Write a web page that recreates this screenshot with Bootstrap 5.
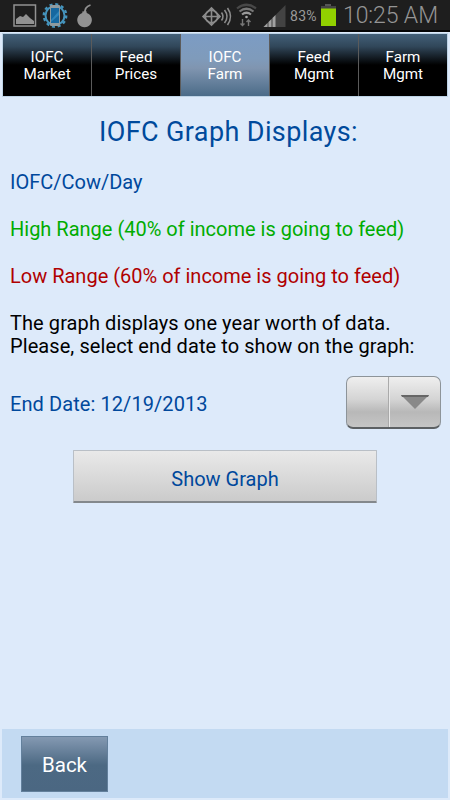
<!DOCTYPE html>
<html lang="en">
<head>
<meta charset="utf-8">
<meta name="viewport" content="width=device-width, initial-scale=1">
<title>IOFC Farm</title>
<link href="https://cdn.jsdelivr.net/npm/bootstrap@5.3.0/dist/css/bootstrap.min.css" rel="stylesheet">
<style>
body{font-family:Roboto,"Liberation Sans",sans-serif;background:#ddeafa;color:#000;font-size:20px;line-height:23.4px;height:800px;overflow:hidden}
.status{height:32px;background:#1e1e1e;border-bottom:2px solid #050505;color:#9a9a9a;padding-left:13px;padding-right:13px;flex:none}
.status svg{flex:none}
.pct{font-size:14px;letter-spacing:.3px;margin-left:4px;width:31px;white-space:nowrap;padding-top:3px}
.clock{font-size:23px;letter-spacing:-.1px;white-space:nowrap;margin-left:6px;width:94px;color:#959595;font-weight:300;padding-top:2px}
.tabs{height:62px;margin:2px 3px 0;flex:none;box-shadow:0 0 0 1px #bdd3e6}
.tabs .nav-link{flex:1 1 0;min-width:0;color:#fff;font-size:15.2px;line-height:17.4px;border-radius:0;padding:2px 0 0;background:linear-gradient(#436079 0,#31475a 20%,#000 50%);border:0;border-left:1px solid #5b5b5b}
.tabs .nav-link:first-child{border-left:0}
.tabs .nav-link.active{color:#fff;background:linear-gradient(#7c9cc4 0,#7f9bbb 40%,#8095b0 55%,#4b6b88 100%)}
.page-title{font-size:27px;line-height:32px;color:#004a9c;letter-spacing:.38px;margin-top:20px;padding-left:7px}
.blue{color:#00489c}.green{color:#00ac00}.red{color:#b00000}
.info{padding:23.4px 10px 0}
.info p{margin-bottom:23.4px}
.note{letter-spacing:.08px}
.date-row{padding:0 9px 0 10px;margin-top:17.4px}
.date-label{padding-top:4px;letter-spacing:.08px}
.picker{width:95px;height:53px;padding:0;border:1px solid #8d9499;border-bottom:2px solid #5c6063;border-radius:7px;background:linear-gradient(#efefef,#d4d4d4 45%,#b8b8b8 70%,#c5c5c5)}
.picker-left{width:42px;border-right:1px solid #aaa;box-shadow:1px 0 #e9e9e9}
.graph-btn{width:304px;height:53px;margin-top:21px;font-size:20px;color:#00489c;border:1px solid #b9bfc6;border-bottom:2px solid #83888c;border-radius:1px;background:linear-gradient(#e9e9e9,#cbcbcb);padding:7px 0 0}
.foot{height:69px;margin:0 2px 2px;background:#c3daf2;padding:7px 19px 5px;flex:none}
.back{width:87px;height:56px;font-size:20.5px;border:1px solid #63809c;border-radius:0;color:#fff;background:linear-gradient(#8499b2,#4c6983 52%,#4b6782);padding:2px 0 0}
</style>
<script src="https://cdn.jsdelivr.net/npm/bootstrap@5.3.0/dist/js/bootstrap.bundle.min.js"></script>
</head>
<body class="d-flex flex-column">
<header class="status d-flex align-items-center">
<svg width="82" height="30" viewBox="13 0 82 30">
<rect x="14" y="5" width="21.500" height="21" fill="none" stroke="#929292" stroke-width="1.500"/>
<path d="M16 24v-5l4-3 3 1 3-3 4 4 4 3v3z" fill="#929292"/>
<circle cx="55" cy="15.500" r="9.500" fill="none" stroke="#4594bd" stroke-width="2"/>
<circle cx="55" cy="15.500" r="11.200" fill="none" stroke="#4594bd" stroke-width="2.400" stroke-dasharray="3 2.860"/>
<rect x="50" y="5" width="10" height="21" rx="1" fill="#8f9a9e"/>
<rect x="51" y="8" width="8" height="15" fill="#1668a0"/><path d="M51 20l8-9v4l-8 7z" fill="#2e85bb"/>
<path d="M85 14c-.5-4 .5-7.500 5.500-9" fill="none" stroke="#929292" stroke-width="1.800"/>
<path d="M82.300 11.500l4-.5.500 2a7.300 7.300 0 1 1-4.500 0z" fill="#929292"/>
</svg>
<svg class="ms-auto" width="86" height="30" viewBox="200 0 86 30">
<g fill="none" stroke="#8c8c8c" stroke-width="1.600"><path d="M203 16.500l8.500-8.500 8.500 8.500-8.500 8.500z"/><circle cx="211.500" cy="16.500" r="6.200"/><path d="M203 16.500h17M211.500 8v17M221.500 12.500q3 4 0 8M224.500 10q5 6.500 0 13M227.500 8q6 8.500 0 17"/></g>
<g fill="none" stroke-width="2.200"><path d="M237 8.500q9.500-7.500 19 0" stroke="#484848"/><path d="M239.500 11.500q7-5.500 14 0" stroke="#777"/><path d="M242 14.500q4.500-3.500 9 0" stroke="#9a9a9a"/></g><circle cx="246.500" cy="17" r="1.300" fill="#aaa"/>
<path d="M242.500 19v7m-2-2.500l2 2 2-2M248.500 26v-6.500m-2 2.500l2-2 2 2" fill="none" stroke="#777" stroke-width="1.400"/>
<path d="M263.500 27L285.500 5v22z" fill="#434343"/>
<path d="M263.500 27l4-4v4zM268.500 27v-5l3-3v8zM272.500 27v-9l3-3v12z" fill="#a1a1a1"/>
</svg>
<span class="pct">83%</span>
<svg width="16" height="30" viewBox="321 0 16 30"><path d="M325 4h6v3h-6z" fill="#555"/><path d="M321 6h15v20h-15z" fill="#444"/><path d="M321 8.500h15V26h-15z" fill="#92d100"/></svg>
<span class="clock">10:25 AM</span>
</header>
<nav class="tabs nav nav-pills flex-nowrap text-center">
<a class="nav-link d-flex align-items-center justify-content-center" href="#">IOFC<br>Market</a>
<a class="nav-link d-flex align-items-center justify-content-center" href="#">Feed<br>Prices</a>
<a class="nav-link active d-flex align-items-center justify-content-center" href="#">IOFC<br>Farm</a>
<a class="nav-link d-flex align-items-center justify-content-center" href="#">Feed<br>Mgmt</a>
<a class="nav-link d-flex align-items-center justify-content-center" href="#">Farm<br>Mgmt</a>
</nav>
<main class="flex-grow-1 d-flex flex-column">
<h1 class="page-title text-center fw-normal mb-0">IOFC Graph Displays:</h1>
<section class="info">
<p class="blue">IOFC/Cow/Day</p>
<p class="green">High Range (40% of income is going to feed)</p>
<p class="red">Low Range (60% of income is going to feed)</p>
<p class="note mb-0">The graph displays one year worth of data.<br>Please, select end date to show on the graph:</p>
</section>
<div class="date-row d-flex align-items-center justify-content-between">
<span class="date-label blue">End Date: 12/19/2013</span>
<button class="picker btn d-flex" type="button" aria-label="Choose end date"><span class="picker-left h-100"></span><svg class="m-auto" width="28" height="16" viewBox="0 0 28 16"><path d="M0 1h28L14 15z" fill="#898989"/><path d="M0 1h28l-1 2H1z" fill="#666"/></svg></button>
</div>
<button class="graph-btn btn mx-auto" type="button">Show Graph</button>
</main>
<footer class="foot"><button class="back btn" type="button">Back</button></footer>
</body>
</html>
